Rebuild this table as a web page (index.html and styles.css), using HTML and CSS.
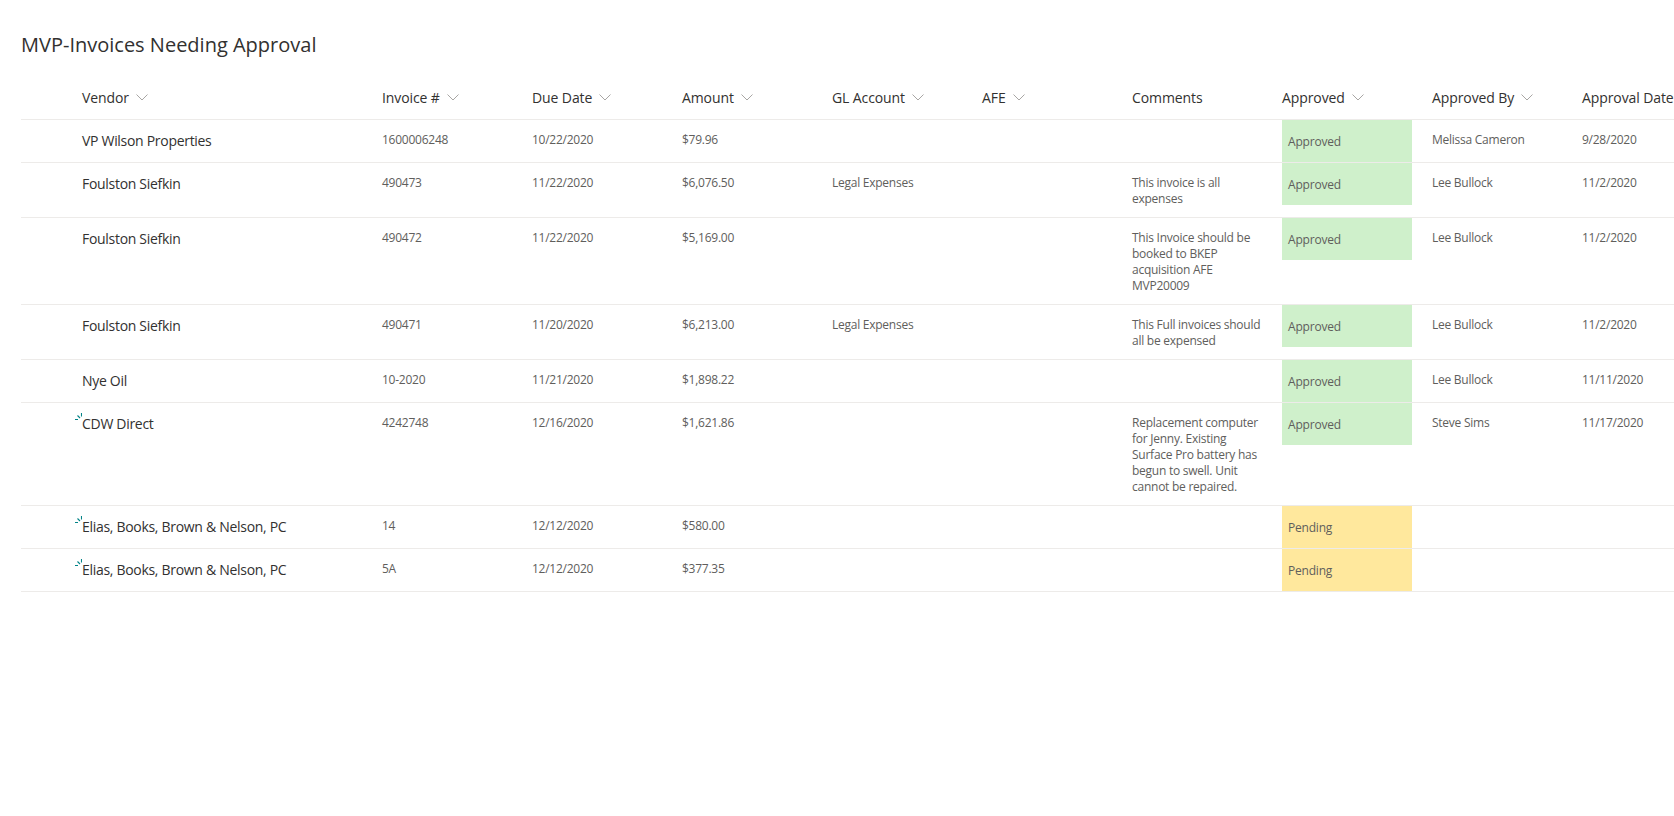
FILE: index.html
```html
<!DOCTYPE html>
<html lang="en">
<head>
<meta charset="utf-8">
<title>MVP-Invoices Needing Approval</title>
<link rel="stylesheet" href="styles.css">
</head>
<body>
<div class="page">
  <h1 class="title">MVP-Invoices Needing Approval</h1>
  <div class="list">
    <div class="row header">
      <div class="sel"></div>
      <div class="hcell">Vendor<svg class="chev" viewBox="0 0 12 7"><path d="M0.5 0.5 L6 6 L11.5 0.5"/></svg></div>
      <div class="hcell">Invoice #<svg class="chev" viewBox="0 0 12 7"><path d="M0.5 0.5 L6 6 L11.5 0.5"/></svg></div>
      <div class="hcell">Due Date<svg class="chev" viewBox="0 0 12 7"><path d="M0.5 0.5 L6 6 L11.5 0.5"/></svg></div>
      <div class="hcell">Amount<svg class="chev" viewBox="0 0 12 7"><path d="M0.5 0.5 L6 6 L11.5 0.5"/></svg></div>
      <div class="hcell">GL Account<svg class="chev" viewBox="0 0 12 7"><path d="M0.5 0.5 L6 6 L11.5 0.5"/></svg></div>
      <div class="hcell">AFE<svg class="chev" viewBox="0 0 12 7"><path d="M0.5 0.5 L6 6 L11.5 0.5"/></svg></div>
      <div class="hcell">Comments</div>
      <div class="hcell">Approved<svg class="chev" viewBox="0 0 12 7"><path d="M0.5 0.5 L6 6 L11.5 0.5"/></svg></div>
      <div class="hcell">Approved By<svg class="chev" viewBox="0 0 12 7"><path d="M0.5 0.5 L6 6 L11.5 0.5"/></svg></div>
      <div class="hcell">Approval Date</div>
    </div>

    <div class="row">
      <div class="sel"></div>
      <div class="vendor"><span class="vname">VP Wilson Properties</span></div>
      <div class="cell">1600006248</div>
      <div class="cell">10/22/2020</div>
      <div class="cell">$79.96</div>
      <div class="cell"></div>
      <div class="cell"></div>
      <div class="cell"></div>
      <div class="status"><span class="badge approved">Approved</span></div>
      <div class="cell">Melissa Cameron</div>
      <div class="cell">9/28/2020</div>
    </div>

    <div class="row">
      <div class="sel"></div>
      <div class="vendor"><span class="vname">Foulston Siefkin</span></div>
      <div class="cell">490473</div>
      <div class="cell">11/22/2020</div>
      <div class="cell">$6,076.50</div>
      <div class="cell">Legal Expenses</div>
      <div class="cell"></div>
      <div class="cell">This invoice is all<br>expenses</div>
      <div class="status"><span class="badge approved">Approved</span></div>
      <div class="cell">Lee Bullock</div>
      <div class="cell">11/2/2020</div>
    </div>

    <div class="row">
      <div class="sel"></div>
      <div class="vendor"><span class="vname">Foulston Siefkin</span></div>
      <div class="cell">490472</div>
      <div class="cell">11/22/2020</div>
      <div class="cell">$5,169.00</div>
      <div class="cell"></div>
      <div class="cell"></div>
      <div class="cell">This Invoice should be<br>booked to BKEP<br>acquisition AFE<br>MVP20009</div>
      <div class="status"><span class="badge approved">Approved</span></div>
      <div class="cell">Lee Bullock</div>
      <div class="cell">11/2/2020</div>
    </div>

    <div class="row">
      <div class="sel"></div>
      <div class="vendor"><span class="vname">Foulston Siefkin</span></div>
      <div class="cell">490471</div>
      <div class="cell">11/20/2020</div>
      <div class="cell">$6,213.00</div>
      <div class="cell">Legal Expenses</div>
      <div class="cell"></div>
      <div class="cell">This Full invoices should<br>all be expensed</div>
      <div class="status"><span class="badge approved">Approved</span></div>
      <div class="cell">Lee Bullock</div>
      <div class="cell">11/2/2020</div>
    </div>

    <div class="row">
      <div class="sel"></div>
      <div class="vendor"><span class="vname">Nye Oil</span></div>
      <div class="cell">10-2020</div>
      <div class="cell">11/21/2020</div>
      <div class="cell">$1,898.22</div>
      <div class="cell"></div>
      <div class="cell"></div>
      <div class="cell"></div>
      <div class="status"><span class="badge approved">Approved</span></div>
      <div class="cell">Lee Bullock</div>
      <div class="cell">11/11/2020</div>
    </div>

    <div class="row">
      <div class="sel"></div>
      <div class="vendor"><span class="vname is-new"><svg class="newicon" viewBox="0 0 7 7"><path d="M0 6.5 H3 M2.5 2.5 L5 5 M6.5 0 V3.5"/></svg>CDW Direct</span></div>
      <div class="cell">4242748</div>
      <div class="cell">12/16/2020</div>
      <div class="cell">$1,621.86</div>
      <div class="cell"></div>
      <div class="cell"></div>
      <div class="cell">Replacement computer<br>for Jenny. Existing<br>Surface Pro battery has<br>begun to swell. Unit<br>cannot be repaired.</div>
      <div class="status"><span class="badge approved">Approved</span></div>
      <div class="cell">Steve Sims</div>
      <div class="cell">11/17/2020</div>
    </div>

    <div class="row">
      <div class="sel"></div>
      <div class="vendor"><span class="vname is-new"><svg class="newicon" viewBox="0 0 7 7"><path d="M0 6.5 H3 M2.5 2.5 L5 5 M6.5 0 V3.5"/></svg>Elias, Books, Brown &amp; Nelson, PC</span></div>
      <div class="cell">14</div>
      <div class="cell">12/12/2020</div>
      <div class="cell">$580.00</div>
      <div class="cell"></div>
      <div class="cell"></div>
      <div class="cell"></div>
      <div class="status"><span class="badge pending">Pending</span></div>
      <div class="cell"></div>
      <div class="cell"></div>
    </div>

    <div class="row">
      <div class="sel"></div>
      <div class="vendor"><span class="vname is-new"><svg class="newicon" viewBox="0 0 7 7"><path d="M0 6.5 H3 M2.5 2.5 L5 5 M6.5 0 V3.5"/></svg>Elias, Books, Brown &amp; Nelson, PC</span></div>
      <div class="cell">5A</div>
      <div class="cell">12/12/2020</div>
      <div class="cell">$377.35</div>
      <div class="cell"></div>
      <div class="cell"></div>
      <div class="cell"></div>
      <div class="status"><span class="badge pending">Pending</span></div>
      <div class="cell"></div>
      <div class="cell"></div>
    </div>
  </div>
</div>
</body>
</html>
```

FILE: styles.css
```css
html, body {
  margin: 0;
  padding: 0;
  background: #ffffff;
  overflow: hidden;
}

body {
  font-family: "Segoe UI", "Open Sans", "Noto Sans", sans-serif;
  color: #323130;
}

.page {
  width: 100vw;
  height: 100vh;
  overflow: hidden;
  padding-left: 21px;
  box-sizing: border-box;
}

.title {
  margin: 0;
  padding-top: 31px;
  font-size: 20px;
  line-height: 28px;
  font-weight: 400;
  color: #323130;
  white-space: nowrap;
}

.list {
  margin-top: 18px;
  width: max-content;
}

.row {
  display: grid;
  grid-template-columns: 61px 300px repeat(9, 150px);
  min-height: 42px;
  border-bottom: 1px solid #edebe9;
}

.header {
  min-height: 42px;
}

.hcell {
  display: flex;
  align-items: center;
  gap: 7px;
  padding-bottom: 2px;
  font-size: 14px;
  letter-spacing: -0.1px;
  color: #323130;
  white-space: nowrap;
}

.chev {
  width: 12px;
  height: 7px;
  fill: none;
  stroke: #a8a6a4;
  stroke-width: 1;
  margin-top: 1px;
}

.vendor {
  padding: 11px 0 9px;
  font-size: 14px;
  line-height: 20px;
  letter-spacing: -0.3px;
  color: #323130;
  white-space: nowrap;
}

.vname {
  position: relative;
}

.newicon {
  position: absolute;
  left: -7px;
  top: -1px;
  width: 7px;
  height: 7px;
  fill: none;
  stroke: #038387;
  stroke-width: 1.1;
}

.cell {
  padding: 12px 8px 10px 0;
  font-size: 12px;
  line-height: 16px;
  letter-spacing: -0.25px;
  color: #605e5c;
  white-space: nowrap;
}

.status {
  display: flex;
  align-items: flex-start;
}

.badge {
  display: flex;
  align-items: center;
  width: 130px;
  height: 42px;
  box-sizing: border-box;
  padding-left: 6px;
  font-size: 12px;
  letter-spacing: -0.2px;
  color: #605e5c;
}

.approved {
  background: #cff0cb;
}

.pending {
  background: #ffe89d;
}
```
